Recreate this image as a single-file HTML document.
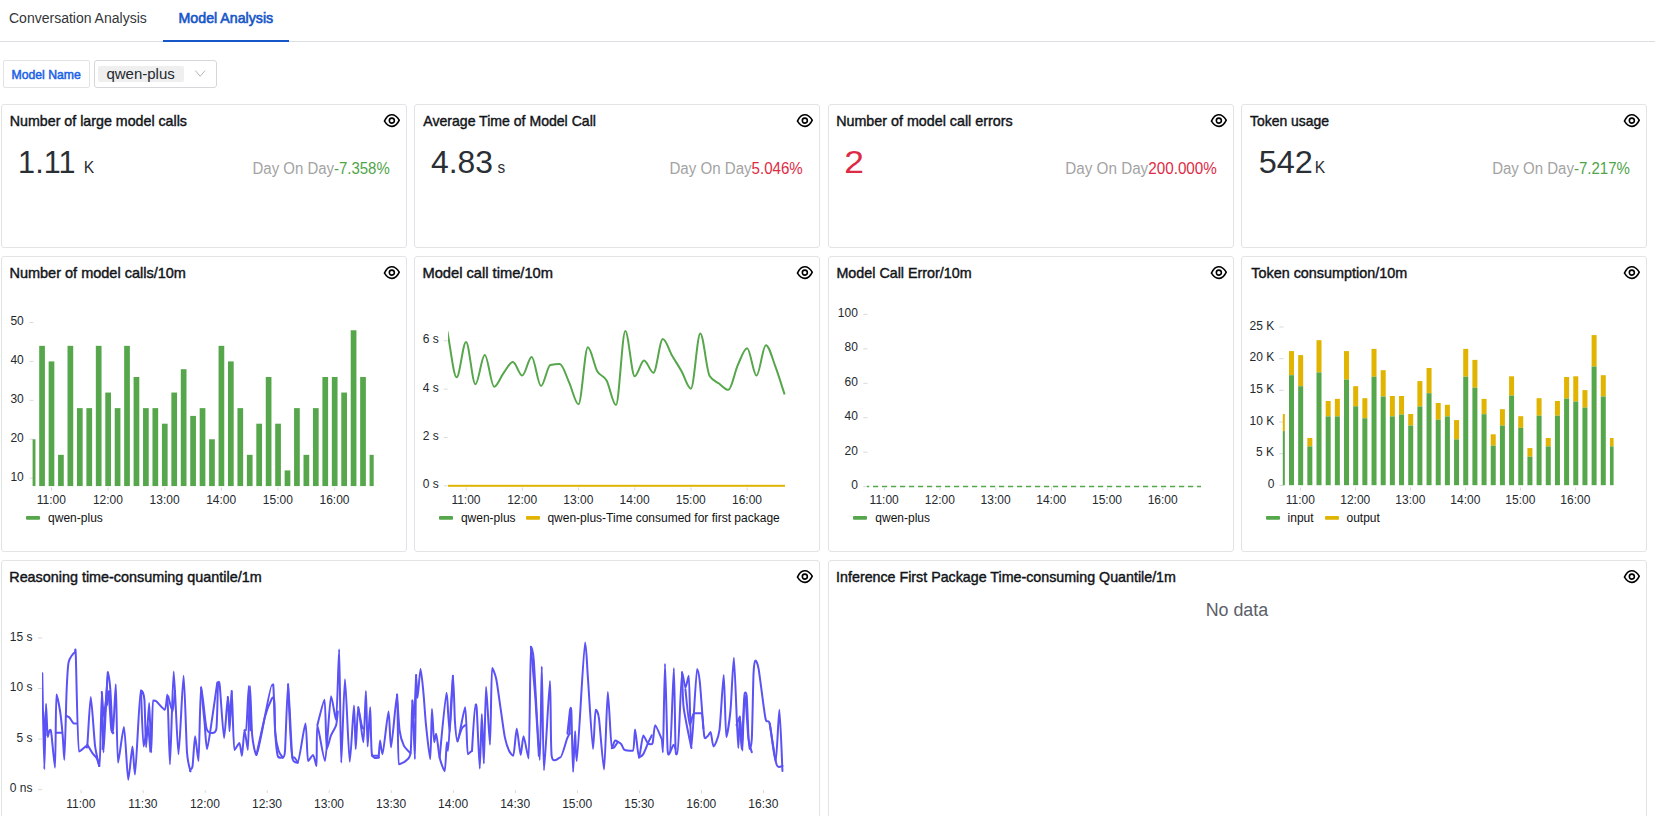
<!DOCTYPE html>
<html><head><meta charset="utf-8"><title>Model Analysis</title>
<style>
html,body{margin:0;padding:0;background:#fff;width:1665px;height:822px;overflow:hidden}
body{font-family:"Liberation Sans",sans-serif;position:relative}
#clip{position:absolute;left:0;top:0;width:1665px;height:816px;overflow:hidden}
.card{position:absolute;box-sizing:border-box;border:1px solid #e3e4e6;border-radius:3px;background:#fff}
.box{position:absolute;box-sizing:border-box;border:1px solid #ddd;background:#fff}
svg{position:absolute;left:0;top:0}
svg text{font-family:"Liberation Sans",sans-serif}
</style></head><body>
<div id="clip">
<div class="box" style="left:3px;top:60px;width:87px;height:28px;border-color:#e2e3e5;border-radius:2px"></div>
<div class="box" style="left:94px;top:60px;width:123px;height:28px;border-color:#d6d7da;border-radius:3px"></div>
<div style="position:absolute;left:98px;top:66px;width:86px;height:16px;background:#efeff0;border-radius:2px"></div>
<div class="card" style="left:1px;top:104px;width:406px;height:144px"></div>
<div class="card" style="left:1px;top:256px;width:406px;height:296px"></div>
<div class="card" style="left:414px;top:104px;width:406px;height:144px"></div>
<div class="card" style="left:414px;top:256px;width:406px;height:296px"></div>
<div class="card" style="left:828px;top:104px;width:406px;height:144px"></div>
<div class="card" style="left:828px;top:256px;width:406px;height:296px"></div>
<div class="card" style="left:1241px;top:104px;width:406px;height:144px"></div>
<div class="card" style="left:1241px;top:256px;width:406px;height:296px"></div>
<div class="card" style="left:1px;top:560px;width:819px;height:300px"></div>
<div class="card" style="left:828px;top:560px;width:819px;height:300px"></div>
<svg width="1665" height="816" viewBox="0 0 1665 816">
<rect x="0" y="41" width="1655" height="1" fill="#dcdde0"/>
<rect x="163" y="40" width="126" height="2" fill="#1656c8"/>
<text x="9.00" y="23.00" font-size="14" font-weight="normal" fill="#333538" textLength="137.77" lengthAdjust="spacingAndGlyphs">Conversation Analysis</text>
<text x="178.56" y="22.70" font-size="14.2" font-weight="normal" fill="#1656c8" textLength="94.63" lengthAdjust="spacingAndGlyphs" stroke="#1656c8" stroke-width="0.6">Model Analysis</text>
<text x="11.52" y="78.60" font-size="12.2" font-weight="normal" fill="#1a62e6" textLength="69.32" lengthAdjust="spacingAndGlyphs" stroke="#1a62e6" stroke-width="0.5">Model Name</text>
<text x="106.40" y="78.70" font-size="14" font-weight="normal" fill="#24292e" textLength="68.40" lengthAdjust="spacingAndGlyphs">qwen-plus</text>
<polyline points="195.3,70.5 200.2,76.3 205.1,70.5" fill="none" stroke="#b5b6b8" stroke-width="1"/>
<g transform="translate(391.85,120.60) rotate(-4)" fill="none" stroke="#000" stroke-width="1.6"><path d="M-7.4,0 C-5.2,-4.1 -2.6,-5.8 0,-5.8 C2.6,-5.8 5.2,-4.1 7.4,0 C5.2,4.1 2.6,5.8 0,5.8 C-2.6,5.8 -5.2,4.1 -7.4,0 Z"/><circle cx="0" cy="0" r="2.5"/></g>
<g transform="translate(391.85,272.60) rotate(-4)" fill="none" stroke="#000" stroke-width="1.6"><path d="M-7.4,0 C-5.2,-4.1 -2.6,-5.8 0,-5.8 C2.6,-5.8 5.2,-4.1 7.4,0 C5.2,4.1 2.6,5.8 0,5.8 C-2.6,5.8 -5.2,4.1 -7.4,0 Z"/><circle cx="0" cy="0" r="2.5"/></g>
<g transform="translate(804.85,120.60) rotate(-4)" fill="none" stroke="#000" stroke-width="1.6"><path d="M-7.4,0 C-5.2,-4.1 -2.6,-5.8 0,-5.8 C2.6,-5.8 5.2,-4.1 7.4,0 C5.2,4.1 2.6,5.8 0,5.8 C-2.6,5.8 -5.2,4.1 -7.4,0 Z"/><circle cx="0" cy="0" r="2.5"/></g>
<g transform="translate(804.85,272.60) rotate(-4)" fill="none" stroke="#000" stroke-width="1.6"><path d="M-7.4,0 C-5.2,-4.1 -2.6,-5.8 0,-5.8 C2.6,-5.8 5.2,-4.1 7.4,0 C5.2,4.1 2.6,5.8 0,5.8 C-2.6,5.8 -5.2,4.1 -7.4,0 Z"/><circle cx="0" cy="0" r="2.5"/></g>
<g transform="translate(1218.85,120.60) rotate(-4)" fill="none" stroke="#000" stroke-width="1.6"><path d="M-7.4,0 C-5.2,-4.1 -2.6,-5.8 0,-5.8 C2.6,-5.8 5.2,-4.1 7.4,0 C5.2,4.1 2.6,5.8 0,5.8 C-2.6,5.8 -5.2,4.1 -7.4,0 Z"/><circle cx="0" cy="0" r="2.5"/></g>
<g transform="translate(1218.85,272.60) rotate(-4)" fill="none" stroke="#000" stroke-width="1.6"><path d="M-7.4,0 C-5.2,-4.1 -2.6,-5.8 0,-5.8 C2.6,-5.8 5.2,-4.1 7.4,0 C5.2,4.1 2.6,5.8 0,5.8 C-2.6,5.8 -5.2,4.1 -7.4,0 Z"/><circle cx="0" cy="0" r="2.5"/></g>
<g transform="translate(1631.85,120.60) rotate(-4)" fill="none" stroke="#000" stroke-width="1.6"><path d="M-7.4,0 C-5.2,-4.1 -2.6,-5.8 0,-5.8 C2.6,-5.8 5.2,-4.1 7.4,0 C5.2,4.1 2.6,5.8 0,5.8 C-2.6,5.8 -5.2,4.1 -7.4,0 Z"/><circle cx="0" cy="0" r="2.5"/></g>
<g transform="translate(1631.85,272.60) rotate(-4)" fill="none" stroke="#000" stroke-width="1.6"><path d="M-7.4,0 C-5.2,-4.1 -2.6,-5.8 0,-5.8 C2.6,-5.8 5.2,-4.1 7.4,0 C5.2,4.1 2.6,5.8 0,5.8 C-2.6,5.8 -5.2,4.1 -7.4,0 Z"/><circle cx="0" cy="0" r="2.5"/></g>
<g transform="translate(804.85,576.60) rotate(-4)" fill="none" stroke="#000" stroke-width="1.6"><path d="M-7.4,0 C-5.2,-4.1 -2.6,-5.8 0,-5.8 C2.6,-5.8 5.2,-4.1 7.4,0 C5.2,4.1 2.6,5.8 0,5.8 C-2.6,5.8 -5.2,4.1 -7.4,0 Z"/><circle cx="0" cy="0" r="2.5"/></g>
<g transform="translate(1631.85,576.60) rotate(-4)" fill="none" stroke="#000" stroke-width="1.6"><path d="M-7.4,0 C-5.2,-4.1 -2.6,-5.8 0,-5.8 C2.6,-5.8 5.2,-4.1 7.4,0 C5.2,4.1 2.6,5.8 0,5.8 C-2.6,5.8 -5.2,4.1 -7.4,0 Z"/><circle cx="0" cy="0" r="2.5"/></g>
<text x="9.76" y="126.00" font-size="14.5" font-weight="normal" fill="#111418" textLength="177.24" lengthAdjust="spacingAndGlyphs" stroke="#111418" stroke-width="0.42">Number of large model calls</text>
<text x="423.30" y="126.00" font-size="14.5" font-weight="normal" fill="#111418" textLength="172.62" lengthAdjust="spacingAndGlyphs" stroke="#111418" stroke-width="0.42">Average Time of Model Call</text>
<text x="836.16" y="126.00" font-size="14.5" font-weight="normal" fill="#111418" textLength="176.41" lengthAdjust="spacingAndGlyphs" stroke="#111418" stroke-width="0.42">Number of model call errors</text>
<text x="1250.02" y="126.00" font-size="14.5" font-weight="normal" fill="#111418" textLength="78.92" lengthAdjust="spacingAndGlyphs" stroke="#111418" stroke-width="0.42">Token usage</text>
<text x="18.10" y="173.00" font-size="32" font-weight="normal" fill="#2a2f35" textLength="57.34" lengthAdjust="spacingAndGlyphs">1.11</text>
<text x="83.75" y="173.00" font-size="16" font-weight="normal" fill="#2a2f35" textLength="10.44" lengthAdjust="spacingAndGlyphs">K</text>
<text x="430.96" y="173.00" font-size="32" font-weight="normal" fill="#2a2f35" textLength="61.95" lengthAdjust="spacingAndGlyphs">4.83</text>
<text x="497.54" y="173.00" font-size="16" font-weight="normal" fill="#2a2f35" textLength="7.70" lengthAdjust="spacingAndGlyphs">s</text>
<text x="844.23" y="173.00" font-size="32" font-weight="normal" fill="#de2a45" textLength="19.68" lengthAdjust="spacingAndGlyphs">2</text>
<text x="1258.70" y="173.00" font-size="32" font-weight="normal" fill="#2a2f35" textLength="54.24" lengthAdjust="spacingAndGlyphs">542</text>
<text x="1314.75" y="173.00" font-size="16" font-weight="normal" fill="#2a2f35" textLength="10.44" lengthAdjust="spacingAndGlyphs">K</text>
<text x="252.50" y="173.60" font-size="16" font-weight="normal" fill="#a3a3a3" textLength="137.24" lengthAdjust="spacingAndGlyphs"><tspan fill="#a3a3a3">Day On Day</tspan><tspan fill="#4fa447">-7.358%</tspan></text>
<text x="669.39" y="173.60" font-size="16" font-weight="normal" fill="#a3a3a3" textLength="133.41" lengthAdjust="spacingAndGlyphs"><tspan fill="#a3a3a3">Day On Day</tspan><tspan fill="#de2a45">5.046%</tspan></text>
<text x="1065.28" y="173.60" font-size="16" font-weight="normal" fill="#a3a3a3" textLength="151.56" lengthAdjust="spacingAndGlyphs"><tspan fill="#a3a3a3">Day On Day</tspan><tspan fill="#de2a45">200.000%</tspan></text>
<text x="1492.20" y="173.60" font-size="16" font-weight="normal" fill="#a3a3a3" textLength="137.64" lengthAdjust="spacingAndGlyphs"><tspan fill="#a3a3a3">Day On Day</tspan><tspan fill="#4fa447">-7.217%</tspan></text>
<text x="9.44" y="278.00" font-size="14.5" font-weight="normal" fill="#111418" textLength="176.45" lengthAdjust="spacingAndGlyphs" stroke="#111418" stroke-width="0.42">Number of model calls/10m</text>
<text x="422.43" y="278.00" font-size="14.5" font-weight="normal" fill="#111418" textLength="130.59" lengthAdjust="spacingAndGlyphs" stroke="#111418" stroke-width="0.42">Model call time/10m</text>
<text x="836.46" y="278.00" font-size="14.5" font-weight="normal" fill="#111418" textLength="135.14" lengthAdjust="spacingAndGlyphs" stroke="#111418" stroke-width="0.42">Model Call Error/10m</text>
<text x="1251.31" y="278.00" font-size="14.5" font-weight="normal" fill="#111418" textLength="155.82" lengthAdjust="spacingAndGlyphs" stroke="#111418" stroke-width="0.42">Token consumption/10m</text>
<text x="9.25" y="582.00" font-size="14.5" font-weight="normal" fill="#111418" textLength="252.39" lengthAdjust="spacingAndGlyphs" stroke="#111418" stroke-width="0.42">Reasoning time-consuming quantile/1m</text>
<text x="836.12" y="582.00" font-size="14.5" font-weight="normal" fill="#111418" textLength="339.80" lengthAdjust="spacingAndGlyphs" stroke="#111418" stroke-width="0.42">Inference First Package Time-consuming Quantile/1m</text>
<text x="1205.67" y="615.80" font-size="18" font-weight="normal" fill="#5b6068" textLength="62.47" lengthAdjust="spacingAndGlyphs">No data</text>
<text x="10.40" y="325.08" font-size="12" fill="#24292e">50</text>
<rect x="29.60" y="321.98" width="3.80" height="1" fill="#d8d9dc"/>
<text x="10.40" y="364.01" font-size="12" fill="#24292e">40</text>
<rect x="29.60" y="360.91" width="3.80" height="1" fill="#d8d9dc"/>
<text x="10.40" y="402.94" font-size="12" fill="#24292e">30</text>
<rect x="29.60" y="399.84" width="3.80" height="1" fill="#d8d9dc"/>
<text x="10.40" y="441.87" font-size="12" fill="#24292e">20</text>
<rect x="29.60" y="438.77" width="3.80" height="1" fill="#d8d9dc"/>
<text x="10.40" y="480.80" font-size="12" fill="#24292e">10</text>
<rect x="29.60" y="477.70" width="3.80" height="1" fill="#d8d9dc"/>
<clipPath id="c1"><rect x="32.60" y="300.00" width="341.10" height="186.30"/></clipPath>
<g clip-path="url(#c1)" fill="#56a64b">
<rect x="29.76" y="439.27" width="5.7" height="47.03"/>
<rect x="39.20" y="345.84" width="5.7" height="140.46"/>
<rect x="48.64" y="361.41" width="5.7" height="124.89"/>
<rect x="58.08" y="454.84" width="5.7" height="31.46"/>
<rect x="67.52" y="345.84" width="5.7" height="140.46"/>
<rect x="76.96" y="408.13" width="5.7" height="78.17"/>
<rect x="86.40" y="408.13" width="5.7" height="78.17"/>
<rect x="95.84" y="345.84" width="5.7" height="140.46"/>
<rect x="105.28" y="392.55" width="5.7" height="93.75"/>
<rect x="114.72" y="408.13" width="5.7" height="78.17"/>
<rect x="124.16" y="345.84" width="5.7" height="140.46"/>
<rect x="133.60" y="376.98" width="5.7" height="109.32"/>
<rect x="143.04" y="408.13" width="5.7" height="78.17"/>
<rect x="152.48" y="408.13" width="5.7" height="78.17"/>
<rect x="161.92" y="423.70" width="5.7" height="62.60"/>
<rect x="171.36" y="392.55" width="5.7" height="93.75"/>
<rect x="180.80" y="369.20" width="5.7" height="117.10"/>
<rect x="190.24" y="415.91" width="5.7" height="70.39"/>
<rect x="199.68" y="408.13" width="5.7" height="78.17"/>
<rect x="209.12" y="439.27" width="5.7" height="47.03"/>
<rect x="218.56" y="345.84" width="5.7" height="140.46"/>
<rect x="228.00" y="361.41" width="5.7" height="124.89"/>
<rect x="237.44" y="408.13" width="5.7" height="78.17"/>
<rect x="246.88" y="454.84" width="5.7" height="31.46"/>
<rect x="256.32" y="423.70" width="5.7" height="62.60"/>
<rect x="265.76" y="376.98" width="5.7" height="109.32"/>
<rect x="275.20" y="423.70" width="5.7" height="62.60"/>
<rect x="284.64" y="470.41" width="5.7" height="15.89"/>
<rect x="294.08" y="408.13" width="5.7" height="78.17"/>
<rect x="303.52" y="454.84" width="5.7" height="31.46"/>
<rect x="312.96" y="408.13" width="5.7" height="78.17"/>
<rect x="322.40" y="376.98" width="5.7" height="109.32"/>
<rect x="331.84" y="376.98" width="5.7" height="109.32"/>
<rect x="341.28" y="392.55" width="5.7" height="93.75"/>
<rect x="350.72" y="330.27" width="5.7" height="156.03"/>
<rect x="360.16" y="376.98" width="5.7" height="109.32"/>
<rect x="369.60" y="454.84" width="5.7" height="31.46"/>
</g>
<text x="36.71" y="503.80" font-size="12" fill="#24292e">11:00</text>
<rect x="51.00" y="487.50" width="1" height="3" fill="#d8d9dc"/>
<text x="92.90" y="503.80" font-size="12" fill="#24292e">12:00</text>
<rect x="107.64" y="487.50" width="1" height="3" fill="#d8d9dc"/>
<text x="149.54" y="503.80" font-size="12" fill="#24292e">13:00</text>
<rect x="164.28" y="487.50" width="1" height="3" fill="#d8d9dc"/>
<text x="206.18" y="503.80" font-size="12" fill="#24292e">14:00</text>
<rect x="220.92" y="487.50" width="1" height="3" fill="#d8d9dc"/>
<text x="262.82" y="503.80" font-size="12" fill="#24292e">15:00</text>
<rect x="277.56" y="487.50" width="1" height="3" fill="#d8d9dc"/>
<text x="319.46" y="503.80" font-size="12" fill="#24292e">16:00</text>
<rect x="334.20" y="487.50" width="1" height="3" fill="#d8d9dc"/>
<rect x="26.00" y="516.10" width="14" height="3.6" rx="1" fill="#56a64b"/>
<text x="48.12" y="521.80" font-size="12" fill="#111">qwen-plus</text>
<text x="422.70" y="343.38" font-size="12" fill="#24292e">6 s</text>
<rect x="444.00" y="340.28" width="3.50" height="1" fill="#d8d9dc"/>
<text x="422.70" y="391.72" font-size="12" fill="#24292e">4 s</text>
<rect x="444.00" y="388.62" width="3.50" height="1" fill="#d8d9dc"/>
<text x="422.70" y="440.06" font-size="12" fill="#24292e">2 s</text>
<rect x="444.00" y="436.96" width="3.50" height="1" fill="#d8d9dc"/>
<text x="422.70" y="488.40" font-size="12" fill="#24292e">0 s</text>
<rect x="444.00" y="485.30" width="3.50" height="1" fill="#d8d9dc"/>
<clipPath id="c2"><rect x="448.00" y="300.00" width="338.00" height="190.00"/></clipPath>
<path clip-path="url(#c2)" d="M447.30,331.11 C450.42,346.50 453.55,377.28 456.67,377.28 C459.79,377.28 462.92,341.99 466.04,341.99 C469.16,341.99 472.29,384.29 475.41,384.29 C478.53,384.29 481.66,355.04 484.78,355.04 C487.90,355.04 491.03,386.70 494.15,386.70 C497.27,386.70 500.40,377.28 503.52,373.17 C506.64,369.06 509.77,362.05 512.89,362.05 C516.01,362.05 519.14,375.58 522.26,375.58 C525.38,375.58 528.51,356.97 531.63,356.97 C534.75,356.97 537.88,385.98 541.00,385.98 C544.12,385.98 547.25,365.59 550.37,364.95 C553.49,364.31 556.62,363.98 559.74,363.98 C562.86,363.98 565.99,375.63 569.11,382.35 C572.23,389.08 575.36,404.35 578.48,404.35 C581.60,404.35 584.73,347.31 587.85,347.31 C590.97,347.31 594.10,365.72 597.22,371.23 C600.34,376.75 603.47,374.78 606.59,380.42 C609.71,386.06 612.84,405.07 615.96,405.07 C619.08,405.07 622.21,331.11 625.33,331.11 C628.45,331.11 631.58,376.31 634.70,376.31 C637.82,376.31 640.95,360.60 644.07,360.60 C647.19,360.60 650.32,372.68 653.44,372.68 C656.56,372.68 659.69,339.09 662.81,339.09 C665.93,339.09 669.06,350.41 672.18,355.77 C675.30,361.12 678.43,365.76 681.55,371.23 C684.67,376.71 687.80,388.64 690.92,388.64 C694.04,388.64 697.17,333.53 700.29,333.53 C703.41,333.53 706.54,371.07 709.66,376.07 C712.78,381.06 715.91,381.26 719.03,383.56 C722.15,385.86 725.28,389.85 728.40,389.85 C731.52,389.85 734.65,372.12 737.77,365.19 C740.89,358.26 744.02,348.27 747.14,348.27 C750.26,348.27 753.39,375.58 756.51,375.58 C759.63,375.58 762.76,345.13 765.88,345.13 C769.00,345.13 772.13,357.94 775.25,366.16 C778.37,374.38 781.50,385.01 784.62,394.44" fill="none" stroke="#56a64b" stroke-width="2" stroke-linejoin="round"/>
<rect x="448" y="484.80" width="337" height="2" fill="#e0b400"/>
<text x="451.41" y="503.80" font-size="12" fill="#24292e">11:00</text>
<rect x="465.70" y="487.50" width="1" height="3" fill="#d8d9dc"/>
<text x="507.16" y="503.80" font-size="12" fill="#24292e">12:00</text>
<rect x="521.90" y="487.50" width="1" height="3" fill="#d8d9dc"/>
<text x="563.36" y="503.80" font-size="12" fill="#24292e">13:00</text>
<rect x="578.10" y="487.50" width="1" height="3" fill="#d8d9dc"/>
<text x="619.56" y="503.80" font-size="12" fill="#24292e">14:00</text>
<rect x="634.30" y="487.50" width="1" height="3" fill="#d8d9dc"/>
<text x="675.76" y="503.80" font-size="12" fill="#24292e">15:00</text>
<rect x="690.50" y="487.50" width="1" height="3" fill="#d8d9dc"/>
<text x="731.96" y="503.80" font-size="12" fill="#24292e">16:00</text>
<rect x="746.70" y="487.50" width="1" height="3" fill="#d8d9dc"/>
<rect x="439.00" y="516.10" width="14" height="3.6" rx="1" fill="#56a64b"/>
<text x="460.92" y="521.80" font-size="12" fill="#111">qwen-plus</text>
<rect x="526.00" y="516.10" width="14" height="3.6" rx="1" fill="#e0b400"/>
<text x="547.42" y="521.80" font-size="12" fill="#111">qwen-plus-Time consumed for first package</text>
<text x="837.84" y="317.00" font-size="12" fill="#24292e">100</text>
<rect x="863.30" y="313.90" width="4.20" height="1" fill="#d8d9dc"/>
<text x="844.50" y="351.45" font-size="12" fill="#24292e">80</text>
<rect x="863.30" y="348.35" width="4.20" height="1" fill="#d8d9dc"/>
<text x="844.50" y="385.90" font-size="12" fill="#24292e">60</text>
<rect x="863.30" y="382.80" width="4.20" height="1" fill="#d8d9dc"/>
<text x="844.50" y="420.35" font-size="12" fill="#24292e">40</text>
<rect x="863.30" y="417.25" width="4.20" height="1" fill="#d8d9dc"/>
<text x="844.50" y="454.80" font-size="12" fill="#24292e">20</text>
<rect x="863.30" y="451.70" width="4.20" height="1" fill="#d8d9dc"/>
<text x="851.16" y="489.25" font-size="12" fill="#24292e">0</text>
<rect x="863.30" y="486.15" width="4.20" height="1" fill="#d8d9dc"/>
<line x1="867" y1="486.5" x2="1201" y2="486.5" stroke="#56a64b" stroke-width="1.3" stroke-dasharray="5.2 3.8" stroke-dashoffset="3"/>
<text x="869.61" y="503.80" font-size="12" fill="#24292e">11:00</text>
<rect x="883.90" y="487.50" width="1" height="3" fill="#d8d9dc"/>
<text x="924.86" y="503.80" font-size="12" fill="#24292e">12:00</text>
<rect x="939.60" y="487.50" width="1" height="3" fill="#d8d9dc"/>
<text x="980.56" y="503.80" font-size="12" fill="#24292e">13:00</text>
<rect x="995.30" y="487.50" width="1" height="3" fill="#d8d9dc"/>
<text x="1036.26" y="503.80" font-size="12" fill="#24292e">14:00</text>
<rect x="1051.00" y="487.50" width="1" height="3" fill="#d8d9dc"/>
<text x="1091.96" y="503.80" font-size="12" fill="#24292e">15:00</text>
<rect x="1106.70" y="487.50" width="1" height="3" fill="#d8d9dc"/>
<text x="1147.66" y="503.80" font-size="12" fill="#24292e">16:00</text>
<rect x="1162.40" y="487.50" width="1" height="3" fill="#d8d9dc"/>
<rect x="853.00" y="516.10" width="14" height="3.6" rx="1" fill="#56a64b"/>
<text x="875.32" y="521.80" font-size="12" fill="#111">qwen-plus</text>
<text x="1249.46" y="329.60" font-size="12" fill="#24292e">25 K</text>
<rect x="1279.30" y="326.50" width="4.40" height="1" fill="#d8d9dc"/>
<text x="1249.46" y="361.28" font-size="12" fill="#24292e">20 K</text>
<rect x="1279.30" y="358.18" width="4.40" height="1" fill="#d8d9dc"/>
<text x="1249.46" y="392.96" font-size="12" fill="#24292e">15 K</text>
<rect x="1279.30" y="389.86" width="4.40" height="1" fill="#d8d9dc"/>
<text x="1249.46" y="424.64" font-size="12" fill="#24292e">10 K</text>
<rect x="1279.30" y="421.54" width="4.40" height="1" fill="#d8d9dc"/>
<text x="1256.12" y="456.32" font-size="12" fill="#24292e">5 K</text>
<rect x="1279.30" y="453.22" width="4.40" height="1" fill="#d8d9dc"/>
<text x="1267.76" y="488.00" font-size="12" fill="#24292e">0</text>
<rect x="1279.30" y="484.90" width="4.40" height="1" fill="#d8d9dc"/>
<clipPath id="c3"><rect x="1282.80" y="300.00" width="330.80" height="185.40"/></clipPath>
<g clip-path="url(#c3)">
<rect x="1279.83" y="414.00" width="5" height="17.10" fill="#e0b400"/>
<rect x="1279.83" y="431.10" width="5" height="54.30" fill="#56a64b"/>
<rect x="1289.00" y="351.10" width="5" height="24.10" fill="#e0b400"/>
<rect x="1289.00" y="375.20" width="5" height="110.20" fill="#56a64b"/>
<rect x="1298.17" y="355.10" width="5" height="31.10" fill="#e0b400"/>
<rect x="1298.17" y="386.20" width="5" height="99.20" fill="#56a64b"/>
<rect x="1307.34" y="438.00" width="5" height="8.40" fill="#e0b400"/>
<rect x="1307.34" y="446.40" width="5" height="39.00" fill="#56a64b"/>
<rect x="1316.51" y="340.20" width="5" height="32.20" fill="#e0b400"/>
<rect x="1316.51" y="372.40" width="5" height="113.00" fill="#56a64b"/>
<rect x="1325.68" y="401.00" width="5" height="15.40" fill="#e0b400"/>
<rect x="1325.68" y="416.40" width="5" height="69.00" fill="#56a64b"/>
<rect x="1334.85" y="398.90" width="5" height="17.50" fill="#e0b400"/>
<rect x="1334.85" y="416.40" width="5" height="69.00" fill="#56a64b"/>
<rect x="1344.02" y="351.10" width="5" height="28.50" fill="#e0b400"/>
<rect x="1344.02" y="379.60" width="5" height="105.80" fill="#56a64b"/>
<rect x="1353.19" y="386.20" width="5" height="20.10" fill="#e0b400"/>
<rect x="1353.19" y="406.30" width="5" height="79.10" fill="#56a64b"/>
<rect x="1362.36" y="398.20" width="5" height="20.10" fill="#e0b400"/>
<rect x="1362.36" y="418.30" width="5" height="67.10" fill="#56a64b"/>
<rect x="1371.53" y="348.90" width="5" height="27.80" fill="#e0b400"/>
<rect x="1371.53" y="376.70" width="5" height="108.70" fill="#56a64b"/>
<rect x="1380.70" y="370.20" width="5" height="26.30" fill="#e0b400"/>
<rect x="1380.70" y="396.50" width="5" height="88.90" fill="#56a64b"/>
<rect x="1389.87" y="396.00" width="5" height="20.40" fill="#e0b400"/>
<rect x="1389.87" y="416.40" width="5" height="69.00" fill="#56a64b"/>
<rect x="1399.04" y="396.00" width="5" height="18.60" fill="#e0b400"/>
<rect x="1399.04" y="414.60" width="5" height="70.80" fill="#56a64b"/>
<rect x="1408.21" y="414.00" width="5" height="11.60" fill="#e0b400"/>
<rect x="1408.21" y="425.60" width="5" height="59.80" fill="#56a64b"/>
<rect x="1417.38" y="381.10" width="5" height="25.40" fill="#e0b400"/>
<rect x="1417.38" y="406.50" width="5" height="78.90" fill="#56a64b"/>
<rect x="1426.55" y="368.00" width="5" height="25.20" fill="#e0b400"/>
<rect x="1426.55" y="393.20" width="5" height="92.20" fill="#56a64b"/>
<rect x="1435.72" y="403.00" width="5" height="16.70" fill="#e0b400"/>
<rect x="1435.72" y="419.70" width="5" height="65.70" fill="#56a64b"/>
<rect x="1444.89" y="404.80" width="5" height="11.60" fill="#e0b400"/>
<rect x="1444.89" y="416.40" width="5" height="69.00" fill="#56a64b"/>
<rect x="1454.06" y="420.10" width="5" height="19.30" fill="#e0b400"/>
<rect x="1454.06" y="439.40" width="5" height="46.00" fill="#56a64b"/>
<rect x="1463.23" y="348.90" width="5" height="27.80" fill="#e0b400"/>
<rect x="1463.23" y="376.70" width="5" height="108.70" fill="#56a64b"/>
<rect x="1472.40" y="359.90" width="5" height="27.80" fill="#e0b400"/>
<rect x="1472.40" y="387.70" width="5" height="97.70" fill="#56a64b"/>
<rect x="1481.57" y="398.90" width="5" height="15.30" fill="#e0b400"/>
<rect x="1481.57" y="414.20" width="5" height="71.20" fill="#56a64b"/>
<rect x="1490.74" y="434.30" width="5" height="11.40" fill="#e0b400"/>
<rect x="1490.74" y="445.70" width="5" height="39.70" fill="#56a64b"/>
<rect x="1499.91" y="409.20" width="5" height="16.40" fill="#e0b400"/>
<rect x="1499.91" y="425.60" width="5" height="59.80" fill="#56a64b"/>
<rect x="1509.08" y="376.30" width="5" height="19.30" fill="#e0b400"/>
<rect x="1509.08" y="395.60" width="5" height="89.80" fill="#56a64b"/>
<rect x="1518.25" y="416.20" width="5" height="11.60" fill="#e0b400"/>
<rect x="1518.25" y="427.80" width="5" height="57.60" fill="#56a64b"/>
<rect x="1527.42" y="448.10" width="5" height="8.60" fill="#e0b400"/>
<rect x="1527.42" y="456.70" width="5" height="28.70" fill="#56a64b"/>
<rect x="1536.59" y="398.20" width="5" height="17.50" fill="#e0b400"/>
<rect x="1536.59" y="415.70" width="5" height="69.70" fill="#56a64b"/>
<rect x="1545.76" y="438.00" width="5" height="8.40" fill="#e0b400"/>
<rect x="1545.76" y="446.40" width="5" height="39.00" fill="#56a64b"/>
<rect x="1554.93" y="401.00" width="5" height="14.70" fill="#e0b400"/>
<rect x="1554.93" y="415.70" width="5" height="69.70" fill="#56a64b"/>
<rect x="1564.10" y="377.00" width="5" height="21.60" fill="#e0b400"/>
<rect x="1564.10" y="398.60" width="5" height="86.80" fill="#56a64b"/>
<rect x="1573.27" y="376.30" width="5" height="25.20" fill="#e0b400"/>
<rect x="1573.27" y="401.50" width="5" height="83.90" fill="#56a64b"/>
<rect x="1582.44" y="390.10" width="5" height="17.50" fill="#e0b400"/>
<rect x="1582.44" y="407.60" width="5" height="77.80" fill="#56a64b"/>
<rect x="1591.61" y="335.10" width="5" height="31.40" fill="#e0b400"/>
<rect x="1591.61" y="366.50" width="5" height="118.90" fill="#56a64b"/>
<rect x="1600.78" y="375.20" width="5" height="21.30" fill="#e0b400"/>
<rect x="1600.78" y="396.50" width="5" height="88.90" fill="#56a64b"/>
<rect x="1609.95" y="438.00" width="5" height="8.40" fill="#e0b400"/>
<rect x="1609.95" y="446.40" width="5" height="39.00" fill="#56a64b"/>
</g>
<text x="1285.71" y="503.80" font-size="12" fill="#24292e">11:00</text>
<rect x="1300.00" y="487.50" width="1" height="3" fill="#d8d9dc"/>
<text x="1340.28" y="503.80" font-size="12" fill="#24292e">12:00</text>
<rect x="1355.02" y="487.50" width="1" height="3" fill="#d8d9dc"/>
<text x="1395.30" y="503.80" font-size="12" fill="#24292e">13:00</text>
<rect x="1410.04" y="487.50" width="1" height="3" fill="#d8d9dc"/>
<text x="1450.32" y="503.80" font-size="12" fill="#24292e">14:00</text>
<rect x="1465.06" y="487.50" width="1" height="3" fill="#d8d9dc"/>
<text x="1505.34" y="503.80" font-size="12" fill="#24292e">15:00</text>
<rect x="1520.08" y="487.50" width="1" height="3" fill="#d8d9dc"/>
<text x="1560.36" y="503.80" font-size="12" fill="#24292e">16:00</text>
<rect x="1575.10" y="487.50" width="1" height="3" fill="#d8d9dc"/>
<rect x="1266.00" y="516.10" width="14" height="3.6" rx="1" fill="#56a64b"/>
<text x="1287.62" y="521.80" font-size="12" fill="#111">input</text>
<rect x="1325.00" y="516.10" width="14" height="3.6" rx="1" fill="#e0b400"/>
<text x="1346.52" y="521.80" font-size="12" fill="#111">output</text>
<text x="9.74" y="640.50" font-size="12" fill="#24292e">15 s</text>
<rect x="38.10" y="637.40" width="4.20" height="1" fill="#d8d9dc"/>
<text x="9.74" y="691.10" font-size="12" fill="#24292e">10 s</text>
<rect x="38.10" y="688.00" width="4.20" height="1" fill="#d8d9dc"/>
<text x="16.40" y="741.70" font-size="12" fill="#24292e">5 s</text>
<rect x="38.10" y="738.60" width="4.20" height="1" fill="#d8d9dc"/>
<text x="9.74" y="792.30" font-size="12" fill="#24292e">0 ns</text>
<rect x="38.10" y="789.20" width="4.20" height="1" fill="#d8d9dc"/>
<clipPath id="c4"><rect x="42.00" y="630.00" width="742.00" height="170.00"/></clipPath>
<g clip-path="url(#c4)" fill="none" stroke="#5a52f5" stroke-width="2" stroke-linejoin="round" stroke-linecap="round">
<path d="M42.26,673.19 C42.49,684.41 43.86,769.36 44.30,769.36 C44.73,769.36 45.60,703.83 46.00,703.83 C46.40,703.83 47.29,737.02 47.70,737.02 C48.12,737.02 49.16,730.21 49.57,730.21 C49.99,730.21 50.64,728.40 51.28,732.77 C51.91,737.13 54.43,767.66 55.02,767.66 C55.62,767.66 55.79,694.47 56.38,694.47 C56.98,694.47 59.39,706.72 60.13,711.49 C60.86,716.26 62.18,729.66 62.68,735.32 C63.18,740.98 63.93,760.00 64.38,760.00 C64.84,760.00 66.10,702.48 66.60,691.06 C67.09,679.65 67.70,666.60 68.64,662.13 C69.57,657.66 73.76,652.77 74.60,652.77 C75.43,652.77 75.29,643.80 75.79,655.32 C76.28,666.84 77.70,751.49 78.85,751.49 C80.00,751.49 84.67,747.18 85.66,746.38 C86.65,745.59 86.77,750.44 87.36,744.68 C87.96,738.92 89.87,697.02 90.77,697.02 C91.66,697.02 94.03,737.49 95.02,745.53 C96.01,753.57 98.78,763.57 99.28,765.96"/>
<path d="M55.87,732.77 L61.83,732.77"/>
<path d="M66.09,715.74 C66.48,715.94 68.60,716.55 69.49,717.45 C70.38,718.34 72.95,723.40 73.74,723.40 C74.54,723.40 76.00,723.40 76.30,723.40"/>
<path d="M87.36,744.68 C87.96,745.67 91.38,751.60 92.47,753.19 C93.56,754.78 95.93,756.81 96.72,758.30 C97.52,759.79 98.98,765.06 99.28,765.96"/>
<path d="M43.11,711.49 L45.66,735.32"/>
<path d="M99.28,765.96 C99.33,765.97 99.47,766.06 99.77,766.06 C100.07,766.06 101.38,691.96 101.81,691.96 C102.25,691.96 102.82,752.44 103.52,752.44 C104.21,752.44 106.98,672.37 107.78,672.37 C108.57,672.37 109.74,682.25 110.33,689.40 C110.93,696.56 112.25,733.70 112.89,733.70 C113.52,733.70 115.19,684.29 115.78,684.29 C116.38,684.29 117.04,762.66 118.00,762.66 C118.95,762.66 122.77,726.88 123.96,726.88 C125.15,726.88 127.23,779.69 128.22,779.69 C129.21,779.69 131.68,746.47 132.48,746.47 C133.27,746.47 134.08,774.58 135.03,774.58 C135.99,774.58 139.56,690.26 140.66,690.26 C141.75,690.26 143.77,692.97 144.40,699.63 C145.04,706.28 145.55,747.33 146.11,747.33 C146.66,747.33 148.58,703.03 149.17,703.03 C149.77,703.03 150.78,752.44 151.22,752.44 C151.66,752.44 152.33,700.48 152.92,700.48 C153.52,700.48 154.94,700.24 156.33,701.33 C157.72,702.42 163.55,709.85 164.85,709.85 C166.14,709.85 166.81,694.51 167.40,694.51 C168.00,694.51 169.22,764.36 169.96,764.36 C170.69,764.36 172.71,671.52 173.71,671.52 C174.70,671.52 177.32,754.14 178.48,754.14 C179.63,754.14 182.59,675.78 183.59,675.78 C184.58,675.78 186.20,741.31 186.99,752.44 C187.79,763.57 190.00,768.99 190.40,771.18"/>
<path d="M102.67,711.55 C103.16,710.76 106.13,707.12 106.93,704.74 C107.72,702.35 108.88,691.11 109.48,691.11 C110.08,691.11 111.74,727.22 112.04,731.99"/>
<path d="M141.00,691.11 C141.29,697.57 142.76,746.47 143.55,746.47 C144.35,746.47 147.02,725.18 147.81,725.18 C148.61,725.18 150.07,748.50 150.37,751.58"/>
<path d="M168.25,696.22 C168.75,698.01 171.72,711.55 172.51,711.55 C173.31,711.55 174.77,693.49 175.07,691.11"/>
<path d="M101.81,691.96 C102.05,694.84 103.46,716.66 103.86,716.66 C104.26,716.66 104.76,716.72 105.22,711.55 C105.68,706.38 107.48,676.94 107.78,672.37"/>
<path d="M102.67,749.03 C103.00,743.86 104.91,711.49 105.56,704.74 C106.22,697.98 107.63,691.11 108.29,691.11 C108.94,691.11 110.59,723.72 111.18,728.59 C111.78,733.46 113.14,732.35 113.40,732.84"/>
<path d="M190.40,771.18 C190.35,770.98 189.75,770.07 190.00,769.47 C190.25,768.88 191.96,769.94 192.56,766.06 C193.15,762.19 194.42,736.25 195.11,736.25 C195.81,736.25 197.82,760.95 198.52,760.95 C199.21,760.95 200.18,686.85 201.07,686.85 C201.97,686.85 205.09,721.52 206.18,726.88 C207.28,732.25 209.25,732.84 210.44,732.84 C211.64,732.84 215.51,734.45 216.41,728.59 C217.30,722.72 217.71,682.59 218.11,682.59 C218.51,682.59 219.12,679.54 219.81,686.00 C220.51,692.46 223.14,737.96 224.07,737.96 C225.01,737.96 227.18,697.07 227.82,697.07 C228.46,697.07 229.07,731.14 229.52,731.14 C229.98,731.14 231.18,691.11 231.74,691.11 C232.29,691.11 233.40,749.88 234.29,749.88 C235.19,749.88 238.51,743.07 239.40,743.07 C240.30,743.07 241.36,755.84 241.96,755.84 C242.56,755.84 243.82,730.29 244.51,730.29 C245.21,730.29 247.29,749.88 247.92,749.88 C248.56,749.88 249.47,686.00 249.97,686.00 C250.46,686.00 251.43,727.35 252.18,735.40 C252.94,743.45 255.35,754.99 256.44,754.99 C257.53,754.99 259.76,741.85 261.55,733.70 C263.34,725.55 270.38,685.14 271.77,685.14 C273.16,685.14 273.08,682.23 273.48,687.70 C273.87,693.17 274.68,724.04 275.18,731.99 C275.68,739.94 276.84,752.86 277.73,755.84 C278.63,758.82 282.25,757.35 282.84,757.55"/>
<path d="M201.07,687.70 C201.47,691.68 203.78,714.62 204.48,721.77 C205.18,728.93 206.14,749.03 207.04,749.03 C207.93,749.03 210.95,726.12 212.15,718.36 C213.34,710.61 216.66,686.76 217.26,682.59"/>
<path d="M227.82,697.07 C228.14,699.36 230.09,716.66 230.55,716.66 C231.00,716.66 231.60,694.09 231.74,691.11"/>
<path d="M244.51,730.29 C244.71,730.29 245.72,730.29 246.22,730.29 C246.71,730.29 248.28,686.00 248.77,686.00 C249.27,686.00 250.28,725.12 250.48,730.29"/>
<path d="M256.44,754.99 C257.43,750.52 263.17,723.22 264.96,716.66 C266.75,710.10 270.68,700.96 271.77,698.77 C272.86,696.59 273.93,697.92 274.33,697.92 C274.72,697.92 274.68,725.83 275.18,731.99 C275.68,738.15 277.69,747.75 278.59,750.73 C279.48,753.71 282.35,756.75 282.84,757.55"/>
<path d="M282.84,757.55 C283.10,756.75 284.39,759.28 285.00,750.73 C285.61,742.19 287.37,684.29 288.07,684.29 C288.76,684.29 290.43,726.66 290.96,735.40 C291.50,744.15 291.87,756.07 292.67,759.25 C293.46,762.43 296.29,762.66 297.78,762.66 C299.27,762.66 304.25,723.48 305.44,723.48 C306.64,723.48 307.10,760.95 308.00,760.95 C308.89,760.95 312.12,754.99 313.11,754.99 C314.10,754.99 316.02,766.06 316.52,766.06 C317.01,766.06 316.37,725.18 317.37,725.18 C318.36,725.18 323.44,760.95 325.03,760.95 C326.62,760.95 329.70,696.22 331.00,696.22 C332.29,696.22 335.15,720.07 336.11,720.07 C337.06,720.07 338.58,649.37 339.17,649.37 C339.77,649.37 340.54,762.66 341.22,762.66 C341.89,762.66 343.97,679.18 344.97,679.18 C345.96,679.18 348.68,761.81 349.74,761.81 C350.79,761.81 353.30,705.59 353.99,705.59 C354.69,705.59 355.20,749.03 355.70,749.03 C356.20,749.03 357.36,707.29 358.25,707.29 C359.15,707.29 362.47,742.21 363.36,742.21 C364.26,742.21 365.42,691.11 365.92,691.11 C366.42,691.11 367.13,746.47 367.62,746.47 C368.12,746.47 369.68,707.29 370.18,707.29 C370.68,707.29 370.89,748.28 371.88,754.14 C372.88,760.00 377.90,757.15 378.70,757.55"/>
<path d="M288.07,684.29 C288.50,692.84 291.08,757.55 291.81,757.55 C292.55,757.55 293.67,757.55 294.37,757.55 C295.07,757.55 297.38,762.06 297.78,762.66"/>
<path d="M317.37,725.18 C318.20,722.20 323.43,699.63 324.52,699.63 C325.62,699.63 325.98,749.03 326.74,749.03 C327.49,749.03 329.90,738.18 331.00,735.40 C332.09,732.62 335.31,727.96 336.11,725.18 C336.90,722.40 337.61,713.14 337.81,711.55"/>
<path d="M358.25,707.29 C358.65,709.38 361.06,722.69 361.66,725.18 C362.26,727.66 363.17,728.19 363.36,728.59"/>
<path d="M371.88,755.84 L378.36,755.84"/>
<path d="M378.70,757.55 C378.85,755.56 379.55,740.51 380.00,740.51 C380.45,740.51 381.56,754.14 382.56,754.14 C383.55,754.14 387.52,711.55 388.52,711.55 C389.51,711.55 390.08,747.33 391.07,747.33 C392.07,747.33 396.14,694.51 397.04,694.51 C397.93,694.51 397.75,764.36 398.74,764.36 C399.73,764.36 404.16,762.35 405.55,760.95 C406.94,759.56 409.87,759.49 410.66,752.44 C411.46,745.38 411.87,700.48 412.37,700.48 C412.86,700.48 414.49,759.25 414.92,759.25 C415.36,759.25 415.82,674.92 416.12,674.92 C416.41,674.92 416.96,697.92 417.48,697.92 C418.00,697.92 419.85,668.96 420.55,668.96 C421.24,668.96 422.81,686.25 423.44,692.81 C424.08,699.37 425.20,717.43 426.00,725.18 C426.79,732.93 429.56,759.25 430.26,759.25 C430.95,759.25 431.50,708.99 431.96,708.99 C432.42,708.99 433.68,742.21 434.17,742.21 C434.67,742.21 435.58,733.70 436.22,733.70 C436.85,733.70 438.63,753.17 439.63,757.55 C440.62,761.92 443.90,771.18 444.74,771.18 C445.57,771.18 446.38,742.21 446.78,742.21 C447.18,742.21 447.43,750.73 448.14,750.73 C448.86,750.73 452.12,675.78 452.91,675.78 C453.71,675.78 454.42,714.12 454.96,721.77 C455.49,729.42 456.32,741.36 457.51,741.36 C458.71,741.36 463.99,707.29 465.18,707.29 C466.37,707.29 466.94,754.14 467.73,754.14 C468.53,754.14 471.50,751.13 471.99,750.73"/>
<path d="M397.04,694.51 C397.33,698.69 398.80,724.33 399.59,730.29 C400.39,736.25 402.56,742.94 403.85,745.62 C405.14,748.30 409.87,752.39 410.66,753.29"/>
<path d="M412.37,700.48 C412.57,702.56 413.63,718.36 414.07,718.36 C414.51,718.36 415.88,679.99 416.12,674.92"/>
<path d="M439.63,757.55 C440.42,749.99 445.45,692.81 446.44,692.81 C447.43,692.81 447.75,708.68 448.14,713.25 C448.54,717.83 449.29,731.99 449.85,731.99 C450.40,731.99 452.56,682.33 452.91,675.78"/>
<path d="M457.51,741.36 C458.01,739.87 460.88,730.47 461.77,728.59 C462.67,726.70 464.78,725.58 465.18,725.18"/>
<path d="M471.99,750.73 C472.34,745.57 474.45,706.44 475.00,706.44 C475.55,706.44 476.15,700.89 476.70,708.14 C477.26,715.40 479.17,768.62 479.77,768.62 C480.37,768.62 481.34,714.11 481.81,714.11 C482.29,714.11 483.36,763.51 483.86,763.51 C484.36,763.51 485.36,686.85 486.07,686.85 C486.79,686.85 489.30,744.77 489.99,744.77 C490.69,744.77 491.30,668.11 492.04,668.11 C492.77,668.11 495.30,674.51 496.29,679.18 C497.29,683.85 499.56,701.39 500.55,708.14 C501.55,714.90 503.82,732.14 504.81,737.10 C505.81,742.07 508.08,748.55 509.07,750.73 C510.07,752.92 512.44,755.84 513.33,755.84 C514.22,755.84 515.88,728.59 516.74,728.59 C517.59,728.59 519.86,754.99 520.66,754.99 C521.45,754.99 522.62,736.25 523.55,736.25 C524.49,736.25 527.81,758.40 528.66,758.40 C529.52,758.40 530.28,646.81 530.88,646.81 C531.47,646.81 532.74,647.23 533.77,660.44 C534.81,673.66 538.80,760.10 539.74,760.10 C540.67,760.10 541.28,666.41 541.78,666.41 C542.28,666.41 543.04,770.32 543.99,770.32 C544.95,770.32 549.06,680.89 549.96,680.89 C550.85,680.89 550.47,746.90 551.66,755.84 C552.85,764.79 558.39,757.55 560.18,757.55 C561.97,757.55 565.90,741.59 566.99,738.81 C568.09,736.02 569.25,734.29 569.55,733.70"/>
<path d="M530.88,646.81 C531.41,652.98 534.54,686.91 535.48,699.63 C536.41,712.35 538.49,749.28 538.88,755.84"/>
<path d="M569.55,733.70 C569.60,730.91 569.79,709.85 570.00,709.85 C570.21,709.85 571.01,704.30 571.36,711.55 C571.72,718.80 572.63,772.03 573.07,772.03 C573.50,772.03 574.67,731.14 575.11,731.14 C575.55,731.14 575.66,760.95 576.81,760.95 C577.97,760.95 583.70,642.56 584.99,642.56 C586.28,642.56 586.95,665.06 587.89,677.48 C588.82,689.90 592.10,749.03 593.00,749.03 C593.89,749.03 594.86,709.85 595.55,709.85 C596.25,709.85 597.97,711.41 598.96,718.36 C599.95,725.32 603.04,769.47 604.07,769.47 C605.11,769.47 606.93,691.96 607.82,691.96 C608.71,691.96 610.88,748.18 611.74,748.18 C612.59,748.18 614.05,740.51 615.14,740.51 C616.24,740.51 620.01,742.83 621.11,743.92 C622.20,745.01 623.12,749.09 624.51,749.88 C625.91,750.68 631.80,750.73 633.03,750.73 C634.26,750.73 634.38,729.44 635.08,729.44 C635.77,729.44 638.04,757.55 638.99,757.55 C639.95,757.55 642.16,735.40 643.25,735.40 C644.35,735.40 647.27,743.92 648.36,743.92 C649.46,743.92 651.83,745.25 652.62,743.07 C653.42,740.88 654.09,725.18 655.18,725.18 C656.27,725.18 661.20,737.97 661.99,739.66"/>
<path d="M611.74,748.18 C612.04,748.08 613.60,748.02 614.29,747.33 C614.99,746.63 617.30,742.81 617.70,742.21"/>
<path d="M638.99,757.55 C639.49,757.15 642.16,755.93 643.25,754.14 C644.35,752.35 647.37,744.40 648.36,742.21 C649.36,740.03 651.37,736.20 651.77,735.40"/>
<path d="M567.44,733.70 L570.00,709.85"/>
<path d="M661.99,739.66 C662.11,741.14 662.61,752.34 662.96,752.34 C663.31,752.34 664.46,663.83 665.00,663.83 C665.54,663.83 666.96,738.61 667.55,748.94 C668.15,759.26 669.37,752.34 670.11,752.34 C670.84,752.34 673.22,668.09 673.85,668.09 C674.49,668.09 675.10,739.11 675.55,748.94 C676.01,758.77 677.01,752.34 677.77,752.34 C678.52,752.34 681.13,672.34 682.02,672.34 C682.91,672.34 684.63,687.66 685.43,687.66 C686.22,687.66 688.13,675.74 688.83,675.74 C689.52,675.74 690.43,748.09 691.38,748.09 C692.34,748.09 696.01,668.94 697.00,668.94 C697.99,668.94 699.06,674.81 699.89,682.55 C700.73,690.30 703.26,729.06 704.15,735.32 C705.04,741.57 706.80,736.17 707.55,736.17 C708.31,736.17 709.92,731.91 710.62,731.91 C711.31,731.91 712.48,746.38 713.51,746.38 C714.54,746.38 718.28,738.55 719.47,730.21 C720.66,721.87 722.93,674.89 723.72,674.89 C724.52,674.89 725.48,737.02 726.28,737.02 C727.07,737.02 729.64,719.02 730.53,709.79 C731.43,700.55 733.04,657.87 733.94,657.87 C734.83,657.87 737.50,748.09 738.19,748.09 C738.89,748.09 739.40,716.60 739.89,716.60 C740.39,716.60 741.95,750.64 742.45,750.64 C742.94,750.64 743.65,693.62 744.15,693.62 C744.65,693.62 746.11,689.72 746.70,696.17 C747.30,702.62 748.66,748.94 749.26,748.94 C749.85,748.94 751.31,747.46 751.81,738.72 C752.30,729.99 753.11,683.18 753.51,674.04 C753.91,664.91 754.62,660.43 755.21,660.43 C755.81,660.43 757.43,662.18 758.62,668.94 C759.81,675.69 764.13,711.94 765.43,718.30 C766.72,724.65 768.49,718.34 769.68,723.40 C770.87,728.47 774.51,761.70 775.64,761.70 C776.77,761.70 778.59,709.79 779.38,709.79 C780.18,709.79 782.09,763.91 782.45,771.06"/>
<path d="M670.11,752.34 C670.50,751.45 672.88,744.68 673.51,744.68 C674.15,744.68 675.31,748.44 675.55,748.94"/>
<path d="M682.02,672.34 C682.22,676.51 682.63,699.25 683.72,708.09 C684.82,716.92 690.49,743.42 691.38,748.09"/>
<path d="M685.43,689.36 C685.92,693.53 688.69,725.11 689.68,725.11 C690.67,725.11 692.55,713.19 693.94,713.19 C695.33,713.19 700.50,713.19 701.60,713.19 C702.69,713.19 703.10,726.72 703.30,728.51"/>
<path d="M736.49,725.11 C736.89,724.11 739.30,716.60 739.89,716.60 C740.49,716.60 741.00,748.94 741.60,748.94 C742.19,748.94 744.21,694.47 745.00,694.47 C745.79,694.47 747.61,731.97 748.40,738.72 C749.20,745.48 751.41,750.75 751.81,752.34"/>
<path d="M769.68,723.40 C770.48,728.17 775.00,759.29 776.49,764.26 C777.98,769.22 781.75,765.76 782.45,765.96"/>
</g>
<text x="66.31" y="808.00" font-size="12" fill="#24292e">11:00</text>
<rect x="80.60" y="790.20" width="1" height="3" fill="#d8d9dc"/>
<text x="128.35" y="808.00" font-size="12" fill="#24292e">11:30</text>
<rect x="142.64" y="790.20" width="1" height="3" fill="#d8d9dc"/>
<text x="189.94" y="808.00" font-size="12" fill="#24292e">12:00</text>
<rect x="204.68" y="790.20" width="1" height="3" fill="#d8d9dc"/>
<text x="251.98" y="808.00" font-size="12" fill="#24292e">12:30</text>
<rect x="266.72" y="790.20" width="1" height="3" fill="#d8d9dc"/>
<text x="314.02" y="808.00" font-size="12" fill="#24292e">13:00</text>
<rect x="328.76" y="790.20" width="1" height="3" fill="#d8d9dc"/>
<text x="376.06" y="808.00" font-size="12" fill="#24292e">13:30</text>
<rect x="390.80" y="790.20" width="1" height="3" fill="#d8d9dc"/>
<text x="438.10" y="808.00" font-size="12" fill="#24292e">14:00</text>
<rect x="452.84" y="790.20" width="1" height="3" fill="#d8d9dc"/>
<text x="500.14" y="808.00" font-size="12" fill="#24292e">14:30</text>
<rect x="514.88" y="790.20" width="1" height="3" fill="#d8d9dc"/>
<text x="562.18" y="808.00" font-size="12" fill="#24292e">15:00</text>
<rect x="576.92" y="790.20" width="1" height="3" fill="#d8d9dc"/>
<text x="624.22" y="808.00" font-size="12" fill="#24292e">15:30</text>
<rect x="638.96" y="790.20" width="1" height="3" fill="#d8d9dc"/>
<text x="686.26" y="808.00" font-size="12" fill="#24292e">16:00</text>
<rect x="701.00" y="790.20" width="1" height="3" fill="#d8d9dc"/>
<text x="748.30" y="808.00" font-size="12" fill="#24292e">16:30</text>
<rect x="763.04" y="790.20" width="1" height="3" fill="#d8d9dc"/>
</svg>
</div>
</body></html>
